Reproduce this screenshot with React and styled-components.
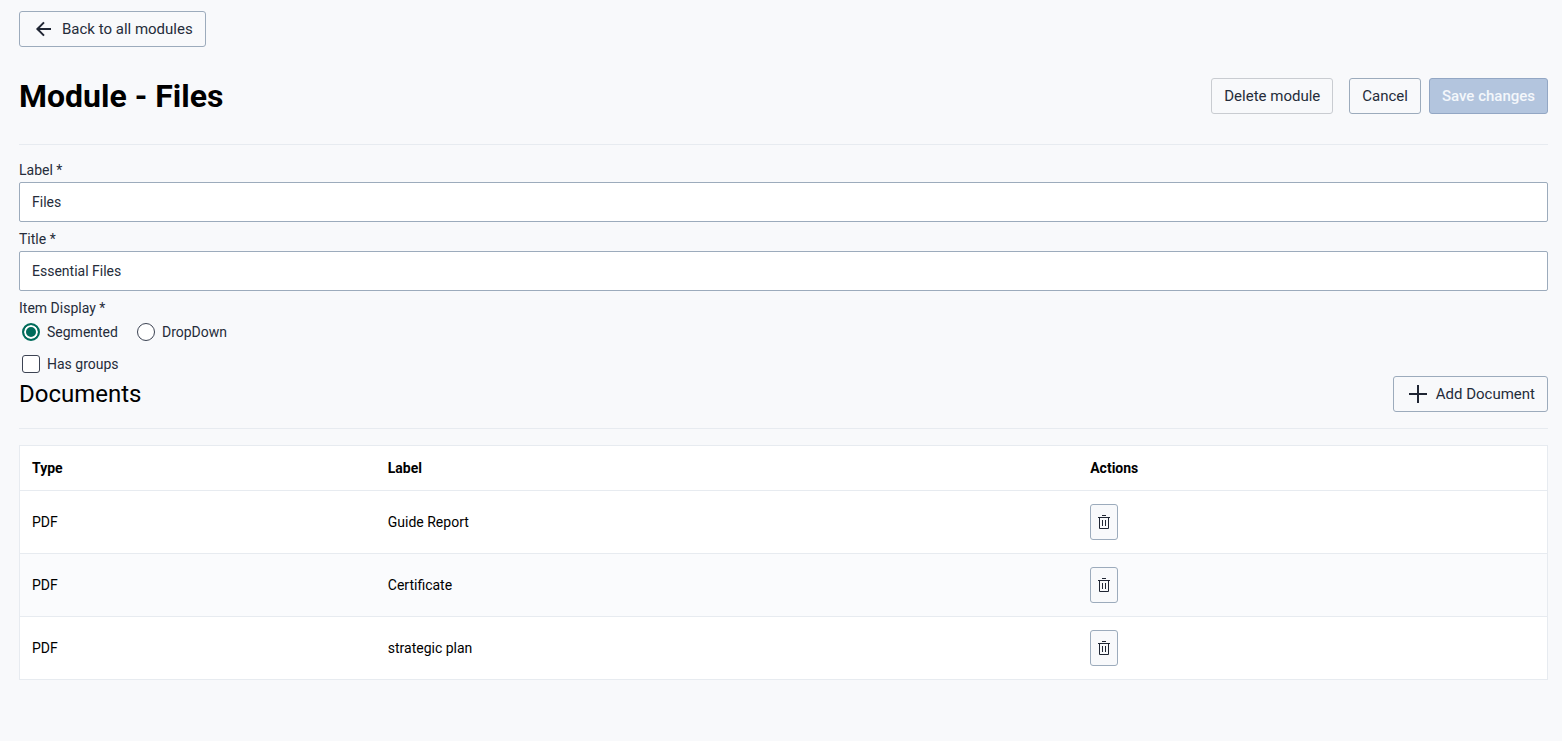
import React, { useState } from 'react';
import styled, { createGlobalStyle } from 'styled-components';

const GlobalStyle = createGlobalStyle`
    * {
        box-sizing: border-box;
    }

    body {
        margin: 0;
        background: #f8f9fb;
        color: #000;
        font-family: Roboto, "Liberation Sans", sans-serif;
        font-size: 14px;
        line-height: 24px;
    }
`

const Page = styled.main`
    padding: 11px 14px 24px 19px;
`

const Button = styled.button`
    display: inline-flex;
    align-items: center;
    justify-content: center;
    gap: 6px;
    height: 36px;
    padding: 0 ${props => (props.$compact ? 5 : 12)}px;

    font-family: inherit;
    font-size: 15px;
    line-height: 20px;
    font-weight: ${props => (props.$primary ? 500 : 400)};
    color: ${props => (props.$primary ? '#f4f7fb' : '#252c3a')};
    background: ${props => (props.$primary ? '#b3c5de' : '#f8f9fb')};
    border: 1px solid ${props => props.$border || '#9cabbc'};
    border-radius: 3px;
    cursor: pointer;

    &:disabled {
        cursor: default;
    }
`

const PageHeader = styled.header`
    display: flex;
    align-items: center;
    justify-content: space-between;
    margin-top: 30px;
    padding-bottom: 30px;
    border-bottom: 1px solid #e7ebf0;
`

const PageTitle = styled.h1`
    margin: 0;
    font-size: 32px;
    line-height: 36px;
    font-weight: 700;
`

const HeaderActions = styled.div`
    display: flex;
    gap: 16px;
`

const ButtonPair = styled.div`
    display: flex;
    gap: 8px;
`

const Form = styled.form`
    display: flex;
    flex-direction: column;
    gap: 5px;
    padding-top: 13px;
    color: #252c3a;
`

const Field = styled.div`
    display: flex;
    flex-direction: column;
`

const TextInput = styled.input`
    width: 100%;
    height: 40px;
    padding: 0 12px;

    font-family: inherit;
    font-size: 14px;
    color: #252c3a;
    background: #fff;
    border: 1px solid #9cabbc;
    border-radius: 2px;
`

const Options = styled.fieldset`
    margin: 0;
    padding: 0;
    border: none;
`

const Legend = styled.legend`
    padding: 0;
`

const OptionRow = styled.div`
    display: flex;
    gap: 16px;
`

const Option = styled.label`
    display: flex;
    align-items: center;
    gap: 7px;
    padding-left: 3px;
    cursor: pointer;
`

const Radio = styled.input`
    appearance: none;
    width: 18px;
    height: 18px;
    margin: 0;
    background: #fff;
    border: 1px solid #3c4353;
    border-radius: 50%;

    &:checked {
        border: 2px solid #006b5b;
        background: #006b5b;
        box-shadow: inset 0 0 0 2px #fff;
    }
`

const Checkbox = styled.input`
    appearance: none;
    width: 18px;
    height: 18px;
    margin: 0;
    background: #fff;
    border: 1px solid #3c4353;
    border-radius: 3px;

    &:checked {
        border-color: #006b5b;
        background: #006b5b;
    }
`

const GroupsRow = styled.div`
    display: flex;
    margin-top: 3px;
`

const SectionHeader = styled.div`
    display: flex;
    align-items: center;
    justify-content: space-between;
    padding-bottom: 16px;
    margin-bottom: 16px;
    border-bottom: 1px solid #e7ebf0;
`

const SectionTitle = styled.h2`
    margin: 0;
    font-size: 24px;
    line-height: 36px;
    font-weight: 400;
`

const Table = styled.table`
    width: 100%;
    table-layout: fixed;
    border-collapse: separate;
    border-spacing: 0;
    background: #fff;
    border: 1px solid #e7ebf0;
    text-align: left;

    tbody tr:nth-child(even) {
        background: #fafbfd;
    }
`

const HeadCell = styled.th`
    width: ${props => props.$width};
    height: 44px;
    padding: 0 12px;
    font-weight: 700;
`

const Cell = styled.td`
    height: 63px;
    padding: 0 12px;
    border-top: 1px solid #e7ebf0;

    button {
        vertical-align: middle;
    }
`

const ArrowIcon = () => (
    <svg width="24" height="24" viewBox="0 0 24 24" fill="none" stroke="#1f2533" strokeWidth="2" aria-hidden="true">
        <path d="M19 12H5.4M12 5.4L5.4 12l6.6 6.6" />
    </svg>
)

const PlusIcon = () => (
    <svg width="24" height="24" viewBox="0 0 24 24" fill="#1f2533" aria-hidden="true">
        <path d="M11 3h2v8h8v2h-8v8h-2v-8H3v-2h8z" />
    </svg>
)

const TrashIcon = () => (
    <svg width="16" height="16" viewBox="0 0 16 16" fill="none" stroke="#1f2533" aria-hidden="true">
        <path d="M6 1.5h4M2 3.5h12M3.5 3.5v11h9v-11M6.5 6v6M9.5 6v6" />
    </svg>
)

const documents = [
    { type: 'PDF', label: 'Guide Report' },
    { type: 'PDF', label: 'Certificate' },
    { type: 'PDF', label: 'strategic plan' },
];

function App() {
    const [inputs, setInputs] = useState({
        label: 'Files',
        title: 'Essential Files',
        display: 'segmented'
    });
    const [hasGroups, setHasGroups] = useState(false);

    const { label, title, display } = inputs;

    const onChange = (e) => {
        const { value, name } = e.target;
        setInputs({
            ...inputs,
            [name]: value
        });
    };

    return (
        <>
            <GlobalStyle />
            <Page>
                <Button type="button"><ArrowIcon />Back to all modules</Button>

                <PageHeader>
                    <PageTitle>Module - Files</PageTitle>
                    <HeaderActions>
                        <Button type="button" $border="#c9ccd1">Delete module</Button>
                        <ButtonPair>
                            <Button type="button">Cancel</Button>
                            <Button type="submit" form="module" $primary $border="#93a7c4" disabled>Save changes</Button>
                        </ButtonPair>
                    </HeaderActions>
                </PageHeader>

                <Form id="module" onSubmit={(e) => e.preventDefault()}>
                    <Field>
                        <label htmlFor="label">Label *</label>
                        <TextInput id="label" type="text" name="label" value={label} onChange={onChange} />
                    </Field>
                    <Field>
                        <label htmlFor="title">Title *</label>
                        <TextInput id="title" type="text" name="title" value={title} onChange={onChange} />
                    </Field>
                    <Options>
                        <Legend>Item Display *</Legend>
                        <OptionRow>
                            <Option>
                                <Radio type="radio" name="display" value="segmented" checked={display === 'segmented'} onChange={onChange} />
                                Segmented
                            </Option>
                            <Option>
                                <Radio type="radio" name="display" value="dropdown" checked={display === 'dropdown'} onChange={onChange} />
                                DropDown
                            </Option>
                        </OptionRow>
                    </Options>
                    <GroupsRow>
                        <Option>
                            <Checkbox type="checkbox" checked={hasGroups} onChange={() => setHasGroups(!hasGroups)} />
                            Has groups
                        </Option>
                    </GroupsRow>
                </Form>

                <SectionHeader>
                    <SectionTitle>Documents</SectionTitle>
                    <Button type="button"><PlusIcon />Add Document</Button>
                </SectionHeader>

                <Table>
                    <thead>
                        <tr>
                            <HeadCell $width="23.3%">Type</HeadCell>
                            <HeadCell $width="46%">Label</HeadCell>
                            <HeadCell>Actions</HeadCell>
                        </tr>
                    </thead>
                    <tbody>
                        {documents.map((doc) => (
                            <tr key={doc.label}>
                                <Cell>{doc.type}</Cell>
                                <Cell>{doc.label}</Cell>
                                <Cell>
                                    <Button type="button" $compact aria-label={`Delete ${doc.label}`}><TrashIcon /></Button>
                                </Cell>
                            </tr>
                        ))}
                    </tbody>
                </Table>
            </Page>
        </>
    )
}

export default App;
